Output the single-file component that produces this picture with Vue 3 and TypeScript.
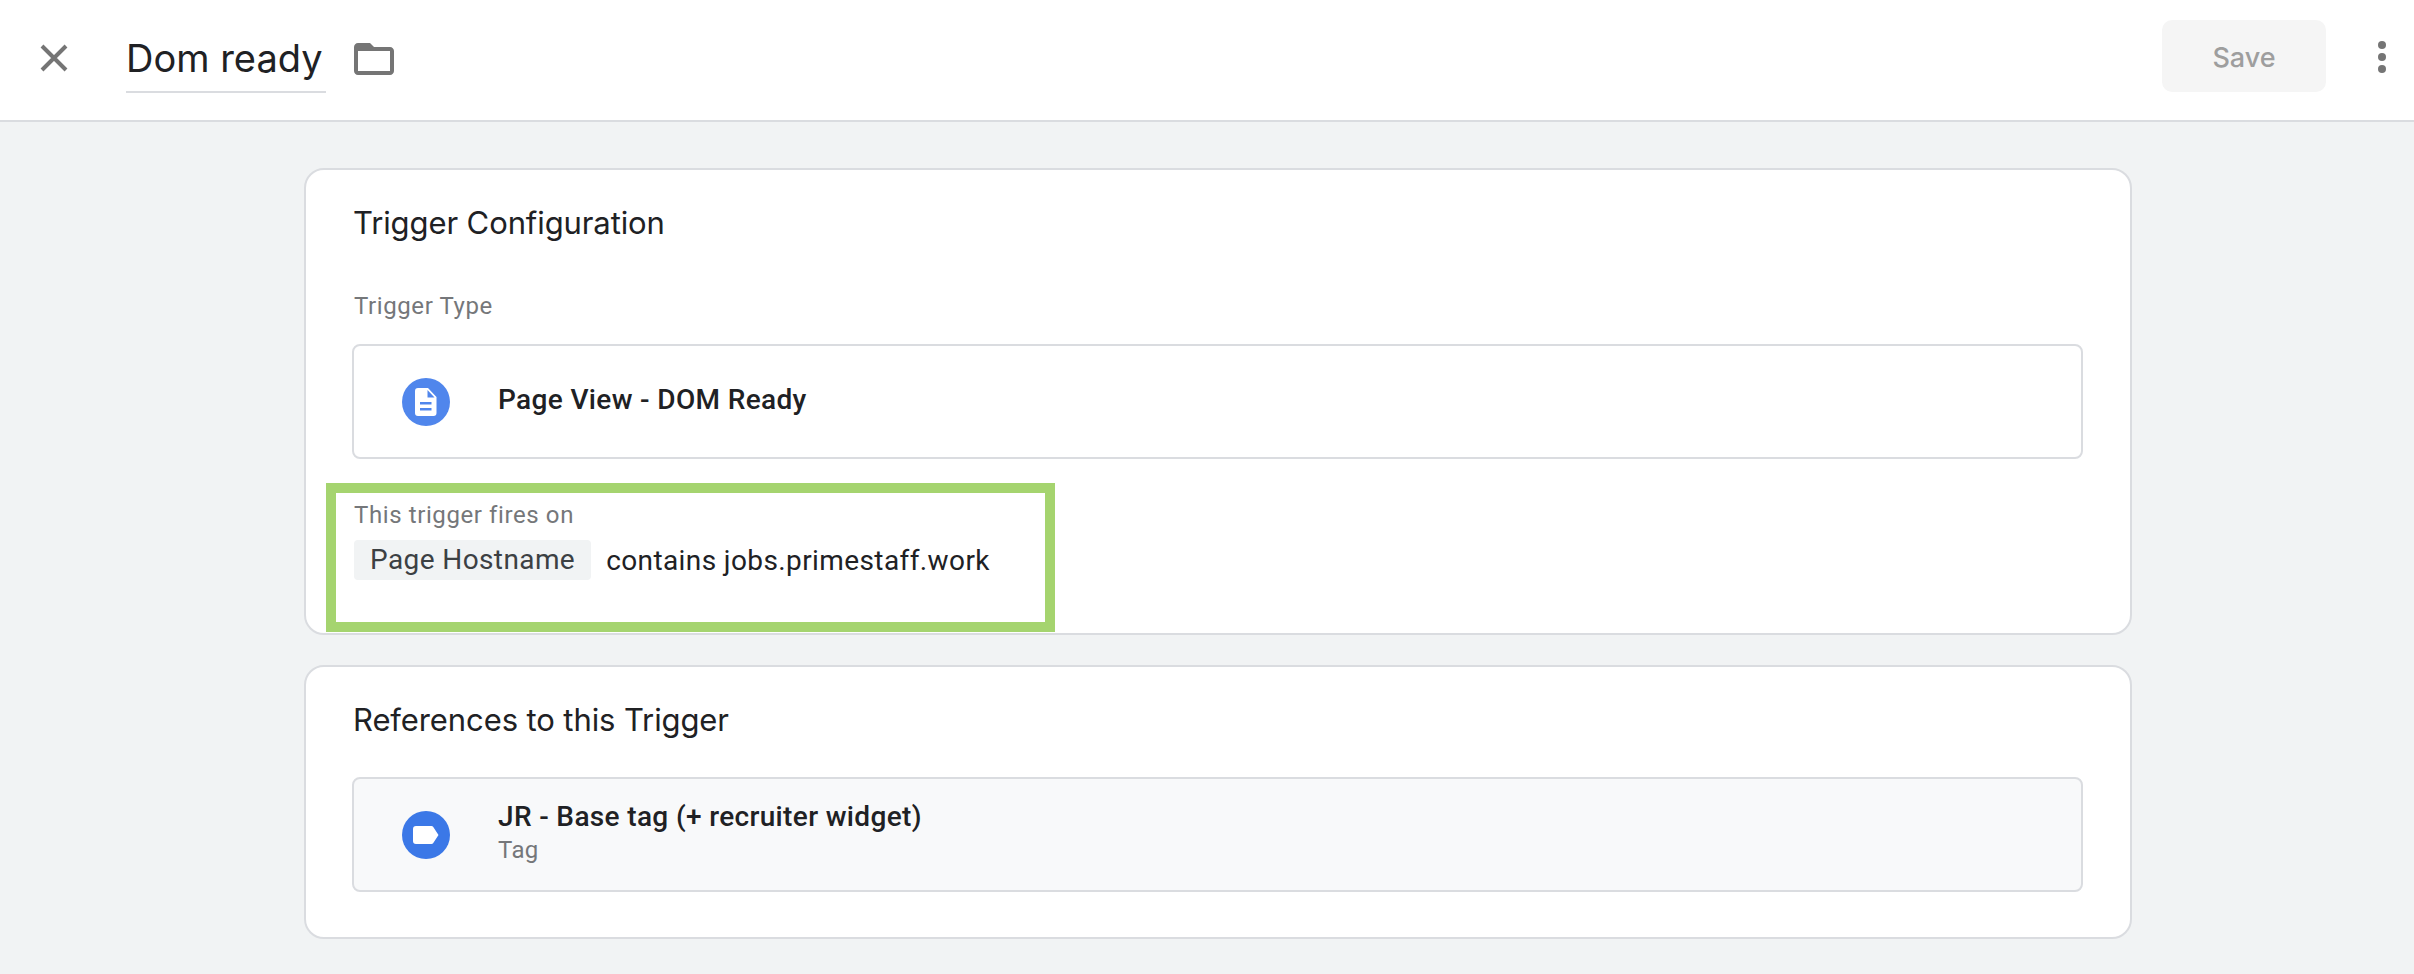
<template>
  <div class="page">
    <header class="topbar">
      <button class="icon-btn close" aria-label="Close">
        <svg width="28" height="28" viewBox="0 0 28 28"><path d="M2 2 26 26M26 2 2 26" stroke="#757575" stroke-width="4" fill="none" /></svg>
      </button>
      <div class="name">Dom ready</div>
      <svg class="folder" width="48" height="48" viewBox="0 0 24 24"><path fill="#757575" d="M20 6h-8l-2-2H4c-1.1 0-1.99.9-1.99 2L2 18c0 1.1.9 2 2 2h16c1.1 0 2-.9 2-2V8c0-1.1-.9-2-2-2zm0 12H4V8h16v10z" /></svg>
      <button class="save">Save</button>
      <div class="more"><i></i><i></i><i></i></div>
    </header>

    <main class="content">
      <section class="card first">
        <h2>Trigger Configuration</h2>
        <div class="label">Trigger Type</div>
        <div class="row">
          <span class="badge doc">
            <svg width="22" height="28" viewBox="0 0 22 28"><path fill="#fff" fill-rule="evenodd" d="M3 0h10l8.500 9v16a3 3 0 0 1-3 3H3a3 3 0 0 1-3-3V3a3 3 0 0 1 3-3zm9.500 2v7.500h7zM5 14v2.500h11.500V14zm0 6v2.500h11.500V20z" /></svg>
          </span>
          <div class="row-text"><div class="title">Page View - DOM Ready</div></div>
        </div>
        <div class="fires">This trigger fires on</div>
        <div class="condition">
          <span class="chip">Page Hostname</span>
          <span class="cond-text">contains jobs.primestaff.work</span>
        </div>
        <div class="highlight"></div>
      </section>

      <section class="card second">
        <h2>References to this Trigger</h2>
        <div class="row shaded">
          <span class="badge tag">
            <svg width="26" height="18" viewBox="0 0 26 18"><path fill="#fff" d="M3 0h15.500a2 2 0 0 1 1.600.8L25.500 9l-5.400 8.200a2 2 0 0 1-1.600.8H3a3 3 0 0 1-3-3V3a3 3 0 0 1 3-3z" /></svg>
          </span>
          <div class="row-text">
            <div class="title">JR - Base tag (+ recruiter widget)</div>
            <div class="sub">Tag</div>
          </div>
        </div>
      </section>
    </main>
  </div>
</template>

<script setup lang="ts">
</script>

<style>
html, body {
  margin: 0;
  background: #f1f3f4;
}
</style>

<style scoped>
.page {
  height: 974px;
  overflow: hidden;
  background: #f1f3f4;
  font-family: Roboto, "Liberation Sans", sans-serif;
  color: #202124;
}

.topbar {
  height: 120px;
  background: #fff;
  border-bottom: 2px solid #dadce0;
  display: flex;
  align-items: center;
  padding: 0 28px 0 40px;
}

.icon-btn {
  border: 0;
  background: none;
  padding: 0;
  display: flex;
  margin-top: -4px;
}

.name {
  margin-left: 58px;
  margin-top: 8px;
  width: 200px;
  height: 56px;
  border-bottom: 2px solid #dadce0;
  font-family: Inter, sans-serif;
  font-size: 38px;
  line-height: 46px;
  color: #202124;
}

.folder {
  margin-left: 24px;
  margin-top: -2px;
}

.save {
  margin-left: auto;
  margin-top: -8px;
  padding-top: 4px;
  width: 164px;
  height: 72px;
  border: 0;
  border-radius: 10px;
  background: #f5f5f5;
  color: #9e9e9e;
  font-family: Inter, sans-serif;
  font-size: 27px;
  font-weight: 500;
}

.more {
  margin-left: 52px;
  margin-top: -6px;
  width: 8px;
  display: flex;
  flex-direction: column;
  gap: 4px;
}

.more i {
  width: 8px;
  height: 8px;
  border-radius: 50%;
  background: #757575;
}

.content {
  padding: 46px 0 0 304px;
  width: 1828px;
}

.card {
  position: relative;
  box-sizing: border-box;
  background: #fff;
  border: 2px solid #dadce0;
  border-radius: 20px;
  padding: 0 48px;
}

.first {
  height: 467px;
  margin-bottom: 30px;
}

.second {
  height: 274px;
}

h2 {
  margin: 0 0 0 -1px;
  padding-top: 33px;
  font-family: Inter, sans-serif;
  font-size: 31px;
  font-weight: 400;
  line-height: 40px;
  letter-spacing: -0.1px;
  color: #202124;
}

.label,
.fires {
  font-size: 24px;
  letter-spacing: 0.6px;
  color: #75777a;
  line-height: 30px;
}

.label {
  margin-top: 48px;
}

.row {
  box-sizing: border-box;
  height: 115px;
  margin-top: 23px;
  margin-left: -2px;
  width: 1731px;
  border: 2px solid #dadce0;
  border-radius: 8px;
  display: flex;
  align-items: center;
  padding-left: 48px;
}

.shaded {
  background: #f8f9fa;
  margin-top: 37px;
}

.badge {
  flex: none;
  width: 48px;
  height: 48px;
  border-radius: 50%;
  display: flex;
  align-items: center;
  justify-content: center;
}

.doc {
  background: #5086ec;
}

.tag {
  background: #3b78e7;
}

.row-text {
  margin-left: 48px;
  padding-bottom: 3px;
}

.shaded .row-text {
  padding-bottom: 5px;
}

.title {
  font-size: 28px;
  font-weight: 500;
  letter-spacing: 0.35px;
  line-height: 36px;
  color: #202124;
}

.sub {
  font-size: 24px;
  color: #75777a;
  line-height: 30px;
  letter-spacing: 0.4px;
}

.fires {
  margin-top: 41px;
}

.condition {
  display: flex;
  align-items: center;
  margin-top: 10px;
}

.chip {
  background: #f1f3f4;
  border-radius: 4px;
  height: 40px;
  line-height: 40px;
  padding: 0 16px;
  font-size: 28px;
  letter-spacing: 0.4px;
  color: #3c4043;
}

.cond-text {
  margin-left: 15px;
  font-size: 28px;
  letter-spacing: 0.4px;
  color: #202124;
}

.highlight {
  position: absolute;
  left: 20px;
  top: 313px;
  width: 729px;
  height: 149px;
  box-sizing: border-box;
  border: 10px solid #a5d46f;
  pointer-events: none;
}
</style>
